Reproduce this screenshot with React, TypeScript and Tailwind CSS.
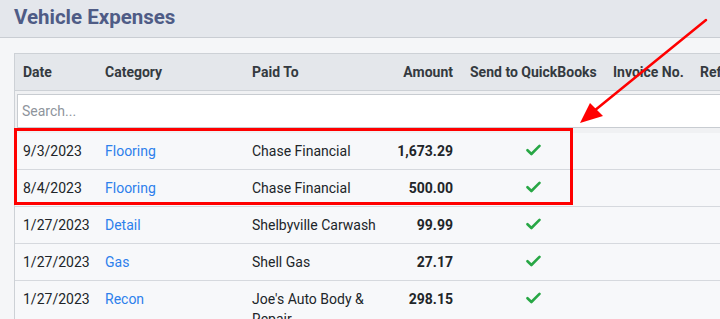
import type React from "react";

interface Expense {
	date: string;
	category: string;
	paidTo: string;
	amount: string;
}

const expenses: Expense[] = [
	{ date: "9/3/2023", category: "Flooring", paidTo: "Chase Financial", amount: "1,673.29" },
	{ date: "8/4/2023", category: "Flooring", paidTo: "Chase Financial", amount: "500.00" },
	{ date: "1/27/2023", category: "Detail", paidTo: "Shelbyville Carwash", amount: "99.99" },
	{ date: "1/27/2023", category: "Gas", paidTo: "Shell Gas", amount: "27.17" },
	{ date: "1/27/2023", category: "Recon", paidTo: "Joe's Auto Body & Repair", amount: "298.15" },
];

const cols = "grid grid-cols-[82px_147px_140px_77px_144px_87px_1fr]";

const Check: React.FC = () => (
	<svg width="15" height="12" viewBox="0 0 15 12" aria-hidden="true">
		<path d="M1.5 6.2 5.4 10 13.5 1.8" fill="none" stroke="#28a745" strokeWidth="2.6" strokeLinecap="round" strokeLinejoin="round" />
	</svg>
);

export default function App() {
	return (
		<div className="relative w-[720px] h-[319px] overflow-hidden bg-[#f5f6f8] font-['Roboto',sans-serif] text-[#212529]">
			<div className="h-[38px] bg-[#e4e7ec] border-b border-[#c9cdd3] px-[14px] flex items-center">
				<h1 className="text-[20.5px] font-bold text-[#4f5c86] leading-none -mt-[3px]">Vehicle Expenses</h1>
			</div>

			<div className="pt-[15px] pl-[14px]">
				<div className="w-[760px] border-l border-t border-[#cdd1d6] bg-[#f7f8fa] text-sm">
					<div className={`${cols} h-[37px] items-center bg-[#e4e7eb] border-b border-[#cdd1d6] font-bold text-[#343a40]`}>
						<div className="pl-2">Date</div>
						<div className="pl-2">Category</div>
						<div className="pl-2">Paid To</div>
						<div className="pr-2 text-right">Amount</div>
						<div className="pl-[9px] whitespace-nowrap">Send to QuickBooks</div>
						<div className="pl-2 whitespace-nowrap">Invoice No.</div>
						<div className="pl-2 whitespace-nowrap">Reference</div>
					</div>

					<div className="h-[42px] pt-[3px] pl-[2px] bg-[#f0f1f3]">
						<input
							type="text"
							placeholder="Search..."
							className="w-full h-[34px] bg-white border border-[#c8ccd1] px-[4px] text-sm text-[#212529] placeholder:text-[#8e949c] outline-none"
						/>
					</div>

					{expenses.map((e) => (
						<div key={e.date + e.amount} className={`${cols} border-b border-[#d6d9de] pt-[8px] pb-[8px] leading-5`}>
							<div className="pl-2">{e.date}</div>
							<div className="pl-2 text-[#2d80ec]">{e.category}</div>
							<div className="pl-2">{e.paidTo}</div>
							<div className="pr-2 text-right font-bold">{e.amount}</div>
							<div className="flex justify-center pt-[3px]">
								<Check />
							</div>
							<div />
							<div />
						</div>
					))}
				</div>
			</div>

			<div className="absolute left-[14px] top-[128px] w-[559px] h-[77px] border-[3px] border-[#ff0000]" />

			<svg className="absolute inset-0 pointer-events-none" width="720" height="319" viewBox="0 0 720 319" aria-hidden="true">
				<line x1="706" y1="20" x2="594" y2="111" stroke="#ff0000" strokeWidth="2.5" strokeLinecap="round" />
				<polygon points="580,123 590,103 603,116" fill="#ff0000" />
			</svg>
		</div>
	);
}
